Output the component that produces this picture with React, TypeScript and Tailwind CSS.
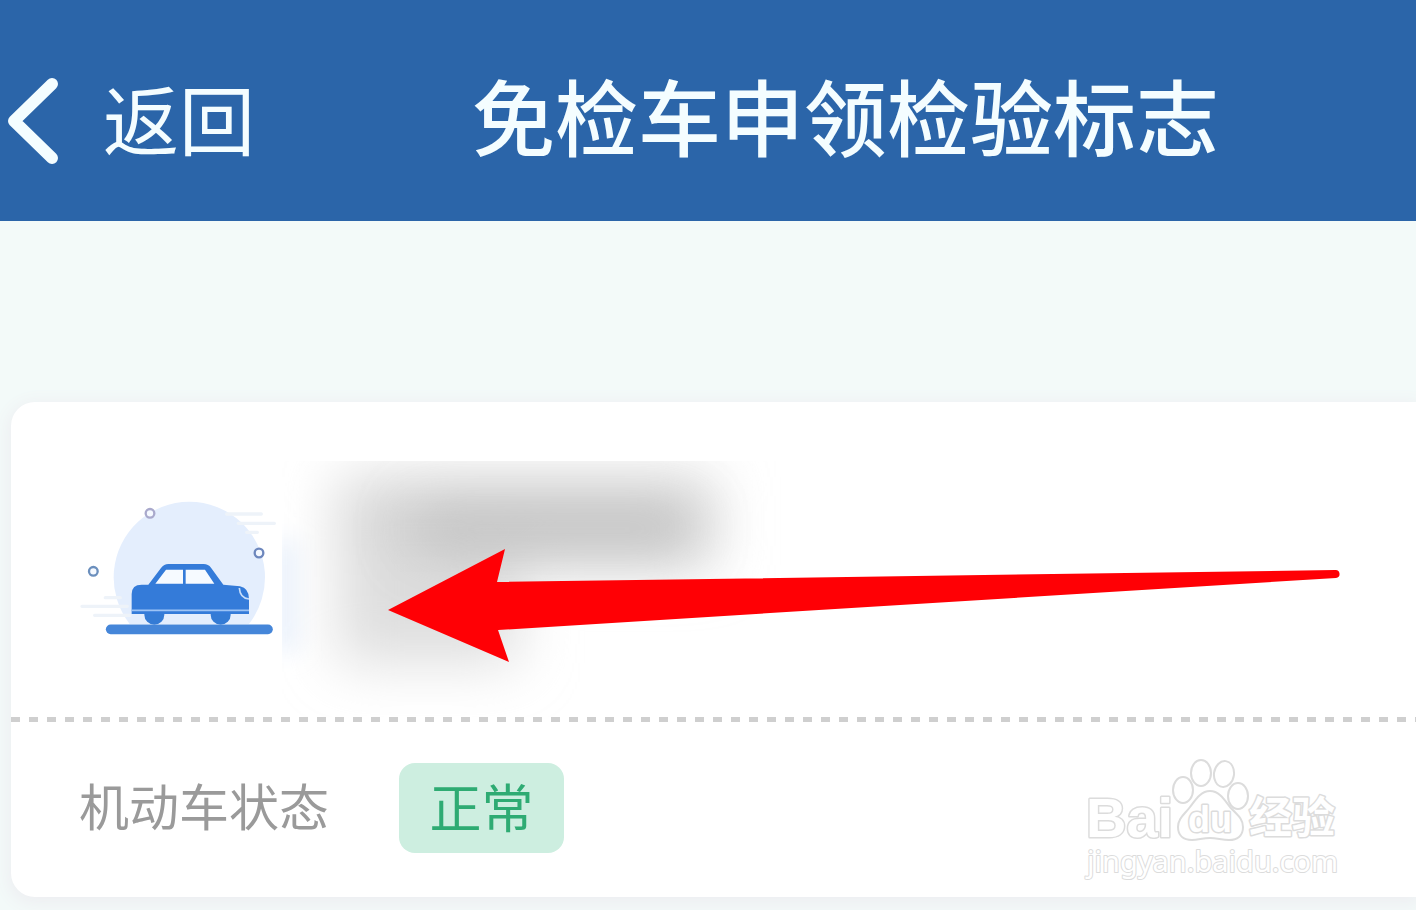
import React from "react";

export default function App() {
  return (
    <div className="relative min-h-screen overflow-hidden bg-[#f3faf9] font-['Noto_Sans_CJK_SC',sans-serif]">
      <Header title="免检车申领检验标志" />

      <main className="pt-[181px] pl-[11px] pb-3">
        <section className="relative rounded-l-3xl bg-white shadow-[0_4px_16px_4px_#eeeff2]">
          {/* Vehicle */}
          <div className="flex h-[315px] pl-[65px] pt-[59px]">
            <CarScene />
            <RedactedPlate />
          </div>

          <hr className="h-[5px] border-0 bg-[repeating-linear-gradient(90deg,#cfcfcf_0,#cfcfcf_9px,transparent_9px,transparent_18px)]" />

          {/* Status */}
          <dl className="flex h-[175px] items-start gap-[70px] pl-[68px] pt-[41px]">
            <dt className="text-[50px] leading-[82px] text-[#9a9a9a]">机动车状态</dt>
            <dd className="flex h-[90px] w-[165px] justify-center rounded-2xl bg-[#cdeee0] text-[52px] leading-[86px] text-[#2eab73]">
              正常
            </dd>
          </dl>

          <Arrow />
          <Watermark />
        </section>
      </main>
    </div>
  );
}

function Header({ title }: { title: string }) {
  return (
    <header className="flex h-[221px] items-center bg-[#2b65a9] pt-5 pl-2 text-[#f4fdff]">
      <button type="button" className="flex items-center gap-[45px] text-[76px] leading-none">
        <svg className="h-[86px] w-[50px]" viewBox="0 0 50 86" fill="none" aria-hidden="true">
          <path d="M44 6 6 43l38 37" stroke="currentColor" strokeWidth="12" strokeLinecap="round" strokeLinejoin="round" />
        </svg>
        <span className="pb-2">返回</span>
      </button>
      <h1 className="ml-[217px] pb-3 text-[83px] leading-none font-medium whitespace-nowrap">{title}</h1>
    </header>
  );
}

function CarScene() {
  return (
    <svg className="mt-[37px] h-[140px] w-[200px] shrink-0 overflow-visible" viewBox="48 54 600 420" fill="none" aria-hidden="true">
      <path d="M209 432A227 227 0 1 1 567 432Z" fill="#e4eefd" />
      {/* wind streaks */}
      <g stroke="#eef3f9" strokeWidth="10" strokeLinecap="round">
        <path d="M500 102h104M535 130h108M560 157h32" />
        <path d="M136 353h45M66 379h136M104 406h106" />
      </g>
      <g strokeWidth="7" fill="#f5f9ff">
        <circle cx="270" cy="100" r="13" stroke="#a9a9cc" />
        <circle cx="597" cy="219" r="13" stroke="#6d87bd" />
        <circle cx="100" cy="274" r="13" stroke="#6b8fbd" />
      </g>
      {/* car */}
      <circle cx="283" cy="404" r="30" fill="#347bd5" />
      <circle cx="482" cy="404" r="30" fill="#347bd5" />
      <path
        d="M215 342q0-28 30-28h20l38-50q9-12 22-12h106q14 0 22 11l37 51 50 5q27 6 27 38v45H215Z"
        fill="#347bd9"
      />
      <path d="m286 311 32-42h51v42ZM377 269h58l28 42h-86Z" fill="#f6faff" />
      <path d="M215 391h352" stroke="#9cc3f5" strokeWidth="5" />
      <path d="M538 324q2 31 29 33" stroke="#c8defa" strokeWidth="5" />
      <path d="M152 448h472" stroke="#4586d9" strokeWidth="29" strokeLinecap="round" />
    </svg>
  );
}

function RedactedPlate() {
  return (
    <svg className="ml-[6px] h-[256px] w-[500px] shrink-0" viewBox="0 0 500 256" aria-hidden="true">
      <defs>
        <filter id="smear" filterUnits="userSpaceOnUse" x="-100" y="-100" width="700" height="460">
          <feGaussianBlur stdDeviation="28" />
        </filter>
        <filter id="smearSoft" filterUnits="userSpaceOnUse" x="-60" y="0" width="160" height="256">
          <feGaussianBlur stdDeviation="12" />
        </filter>
      </defs>
      <rect x="-6" y="80" width="20" height="110" fill="#e6effb" filter="url(#smearSoft)" />
      <g filter="url(#smear)">
        <rect x="56" y="16" width="376" height="88" fill="#d8d8d8" />
        <rect x="56" y="90" width="180" height="112" fill="#dedede" />
      </g>
      <g filter="url(#smear)" opacity=".5">
        <rect x="130" y="46" width="280" height="44" fill="#a4a4a4" />
      </g>
    </svg>
  );
}

function Arrow() {
  return (
    <svg className="absolute top-[146px] left-[377px] h-[116px] w-[954px]" viewBox="0 0 954 116" aria-hidden="true">
      <path d="M0 62 117 1 109 34 947 22a4 4 0 0 1 1 8L110 82l11 32Z" fill="#ff0005" />
    </svg>
  );
}

function Watermark() {
  return (
    <svg
      className="absolute right-[70px] bottom-3 h-[132px] w-[264px]"
      viewBox="0 0 264 132"
      fill="#fff"
      stroke="#dcdcdc"
      strokeWidth="2"
      strokeLinejoin="round"
      role="img"
      aria-label="Baidu"
    >
      <text x="4" y="84" fontSize="56" strokeWidth="3" paintOrder="stroke" className="font-['Liberation_Sans',sans-serif] font-bold">
        Bai
      </text>
      <ellipse cx="101" cy="37" rx="10" ry="13" />
      <ellipse cx="119" cy="20" rx="10" ry="13" />
      <ellipse cx="142" cy="21" rx="10" ry="13" transform="rotate(8 142 21)" />
      <ellipse cx="156" cy="43" rx="10" ry="13" />
      <path d="M128 38c9 0 14 8 20 16 6 7 13 11 13 20 0 9-6 13-14 13-7 0-12-2-19-2s-12 2-18 2c-9 0-14-5-14-13 0-9 7-13 12-20 6-8 11-16 20-16Z" />
      <text x="106" y="79" fontSize="36" strokeWidth="3" paintOrder="stroke" className="font-['Liberation_Sans',sans-serif] font-bold">
        du
      </text>
      <text x="167" y="80" fontSize="43" strokeWidth="3" paintOrder="stroke" className="font-['Noto_Sans_CJK_SC',sans-serif] font-bold">
        经验
      </text>
      <text x="5" y="119" fontSize="29" strokeWidth="2" paintOrder="stroke" className="font-['Noto_Sans',sans-serif]">
        jingyan.baidu.com
      </text>
    </svg>
  );
}
